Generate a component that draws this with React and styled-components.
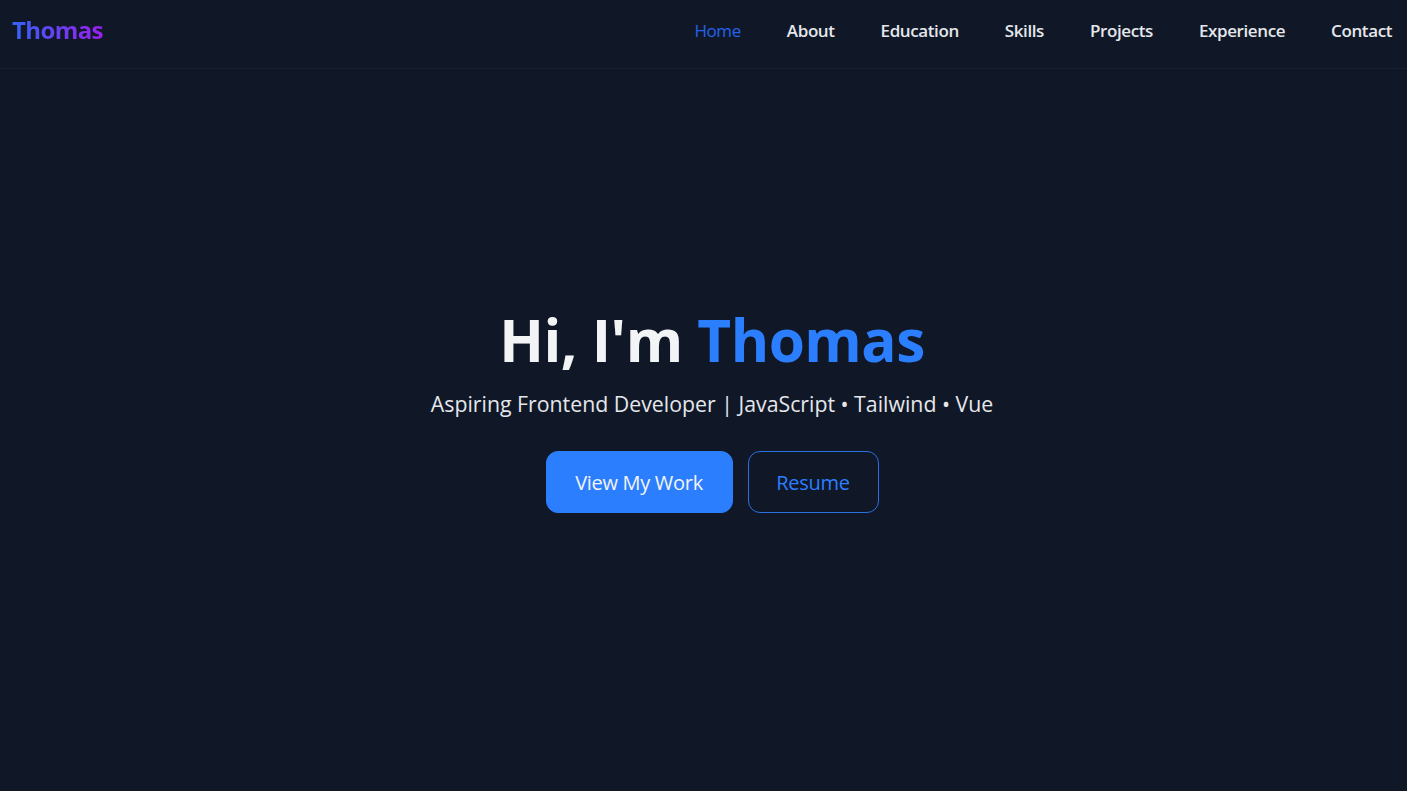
import React from "react";
import styled, { createGlobalStyle } from "styled-components";

const Global = createGlobalStyle`
  html, body { margin: 0; padding: 0; background: #101828; }
  body { font-family: "Open Sans", "Noto Sans", sans-serif; color: #f3f4f6; }
  * { box-sizing: border-box; }
`;

const Page = styled.div`
  min-height: 791px;
  background: #101828;
  display: flex;
  flex-direction: column;
`;

const Header = styled.header`
  height: 69px;
  display: flex;
  align-items: center;
  justify-content: space-between;
  padding: 0 15px 8px 12px;
  border-bottom: 1px solid #18212f;
`;

const Logo = styled.div`
  font-size: 24px;
  font-weight: 700;
  letter-spacing: -0.6px;
  background: linear-gradient(90deg, #3563f5, #9b1ff0);
  -webkit-background-clip: text;
  background-clip: text;
  color: transparent;
  padding-bottom: 2px;
`;

const Nav = styled.nav`
  display: flex;
  gap: 46px;
`;

const NavLink = styled.a`
  font-size: 17px;
  letter-spacing: -0.4px;
  color: ${(p) => (p.$active ? "#2563eb" : "#e5e7eb")};
  text-decoration: none;
  font-weight: ${(p) => (p.$active ? 500 : 600)};
`;

const Hero = styled.section`
  flex: 1;
  display: flex;
  flex-direction: column;
  align-items: center;
  padding-top: 234px;
  padding-left: 17px;
`;

const Title = styled.h1`
  margin: 0;
  font-size: 58.5px;
  line-height: 72px;
  font-weight: 700;
  letter-spacing: -0.5px;
  color: #f3f4f6;
`;

const Accent = styled.span`
  color: #2b7fff;
`;

const Subtitle = styled.p`
  margin: 15px 0 0;
  font-size: 21.3px;
  line-height: 28px;
  color: #e5e7eb;
`;

const Actions = styled.div`
  display: flex;
  gap: 15px;
  margin-top: 33px;
`;

const Button = styled.a`
  display: inline-flex;
  align-items: center;
  justify-content: center;
  height: 62px;
  width: ${(p) => p.$w}px;
  border-radius: 12px;
  font-size: 20px;
  letter-spacing: -0.3px;
  text-decoration: none;
  font-weight: ${(p) => (p.$primary ? 500 : 400)};
  background: ${(p) => (p.$primary ? "#2b7fff" : "transparent")};
  color: ${(p) => (p.$primary ? "#f3f4f6" : "#2b7fff")};
  border: 1px solid ${(p) => (p.$primary ? "#2b7fff" : "#2b6fe0")};
`;

const links = ["Home", "About", "Education", "Skills", "Projects", "Experience", "Contact"];

export default function App() {
  return (
    <Page>
      <Global />
      <Header>
        <Logo>Thomas</Logo>
        <Nav>
          {links.map((l, i) => (
            <NavLink key={l} href="#" $active={i === 0}>
              {l}
            </NavLink>
          ))}
        </Nav>
      </Header>
      <Hero>
        <Title>
          Hi, I'm <Accent>Thomas</Accent>
        </Title>
        <Subtitle>Aspiring Frontend Developer | JavaScript • Tailwind • Vue</Subtitle>
        <Actions>
          <Button href="#" $primary $w={187}>View My Work</Button>
          <Button href="#" $w={131}>Resume</Button>
        </Actions>
      </Hero>
    </Page>
  );
}
